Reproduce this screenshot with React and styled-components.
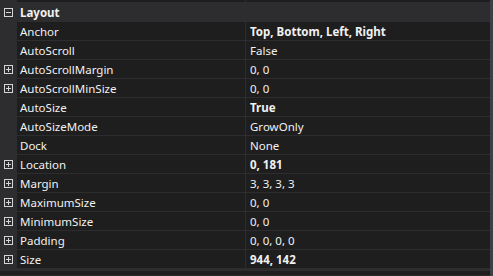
import React from 'react'
import styled, { createGlobalStyle } from 'styled-components'

const GlobalStyle = createGlobalStyle`
  html, body {
    margin: 0;
    padding: 0;
    background: #252526;
    overflow: hidden;
  }
`

const rows = [
  { name: 'Anchor', value: 'Top, Bottom, Left, Right', bold: true },
  { name: 'AutoScroll', value: 'False' },
  { name: 'AutoScrollMargin', value: '0, 0', expand: true },
  { name: 'AutoScrollMinSize', value: '0, 0', expand: true },
  { name: 'AutoSize', value: 'True', bold: true },
  { name: 'AutoSizeMode', value: 'GrowOnly' },
  { name: 'Dock', value: 'None' },
  { name: 'Location', value: '0, 181', bold: true, expand: true },
  { name: 'Margin', value: '3, 3, 3, 3', expand: true },
  { name: 'MaximumSize', value: '0, 0', expand: true },
  { name: 'MinimumSize', value: '0, 0', expand: true },
  { name: 'Padding', value: '0, 0, 0, 0', expand: true },
  { name: 'Size', value: '944, 142', bold: true, expand: true },
]

// the little +/- box in the left gutter
function Toggle({ open }) {
  return (
    <svg width="9" height="9" viewBox="0 0 9 9">
      <rect x="0.5" y="0.5" width="8" height="8" fill="none" stroke="#d4d4d4" />
      <line x1="2" y1="4.5" x2="7" y2="4.5" stroke="#d4d4d4" />
      {!open && <line x1="4.5" y1="2" x2="4.5" y2="7" stroke="#d4d4d4" />}
    </svg>
  )
}

function App() {
  return (
    <Grid>
      <GlobalStyle />
      {/* tail of the row above, scrolled mostly out of view */}
      <Row>
        <Gutter />
        <Name />
        <Value />
      </Row>
      <Category>
        <Gutter>
          <Toggle open />
        </Gutter>
        <CategoryTitle>Layout</CategoryTitle>
      </Category>
      {rows.map((r) => (
        <Row key={r.name}>
          <Gutter>{r.expand && <Toggle />}</Gutter>
          <Name>{r.name}</Name>
          <Value bold={r.bold}>{r.value}</Value>
        </Row>
      ))}
      <Footer />
    </Grid>
  )
}

export default App

const Grid = styled.div`
  width: 490px;
  height: 276px;
  border-right: 3px solid #3f3f46;
  background: #2d2d30;
  font-family: "Noto Sans", "Open Sans", sans-serif;
  font-size: 11.5px;
  color: #f1f1f1;
  display: flex;
  flex-direction: column;
`

const Row = styled.div`
  display: flex;
  height: 19px;
  flex-shrink: 0;
  &:first-child {
    margin-top: -16px;
  }
`

const Gutter = styled.div`
  width: 17px;
  flex-shrink: 0;
  background: #2d2d30;
  display: flex;
  align-items: center;
  justify-content: center;
  padding-right: 1px;
  box-sizing: border-box;
`

const Name = styled.div`
  width: 229px;
  flex-shrink: 0;
  box-sizing: border-box;
  padding-left: 3px;
  background: #1e1e1e;
  border-bottom: 1px solid #2d2d30;
  border-right: 1px solid #2d2d30;
  display: flex;
  align-items: center;
  white-space: nowrap;
`

const Value = styled.div`
  flex: 1;
  box-sizing: border-box;
  padding-left: 4px;
  background: #1e1e1e;
  border-bottom: 1px solid #2d2d30;
  display: flex;
  align-items: center;
  font-weight: ${(p) => (p.bold ? 700 : 400)};
  white-space: nowrap;
`

const Category = styled.div`
  display: flex;
  height: 19px;
  flex-shrink: 0;
  background: #2d2d30;
`

const CategoryTitle = styled.div`
  padding-left: 3px;
  display: flex;
  align-items: center;
  font-weight: 700;
`

const Footer = styled.div`
  height: 4px;
  margin-top: 1px;
  background: #1e1e1e;
  border-top: 1px solid #2d2d30;
`
